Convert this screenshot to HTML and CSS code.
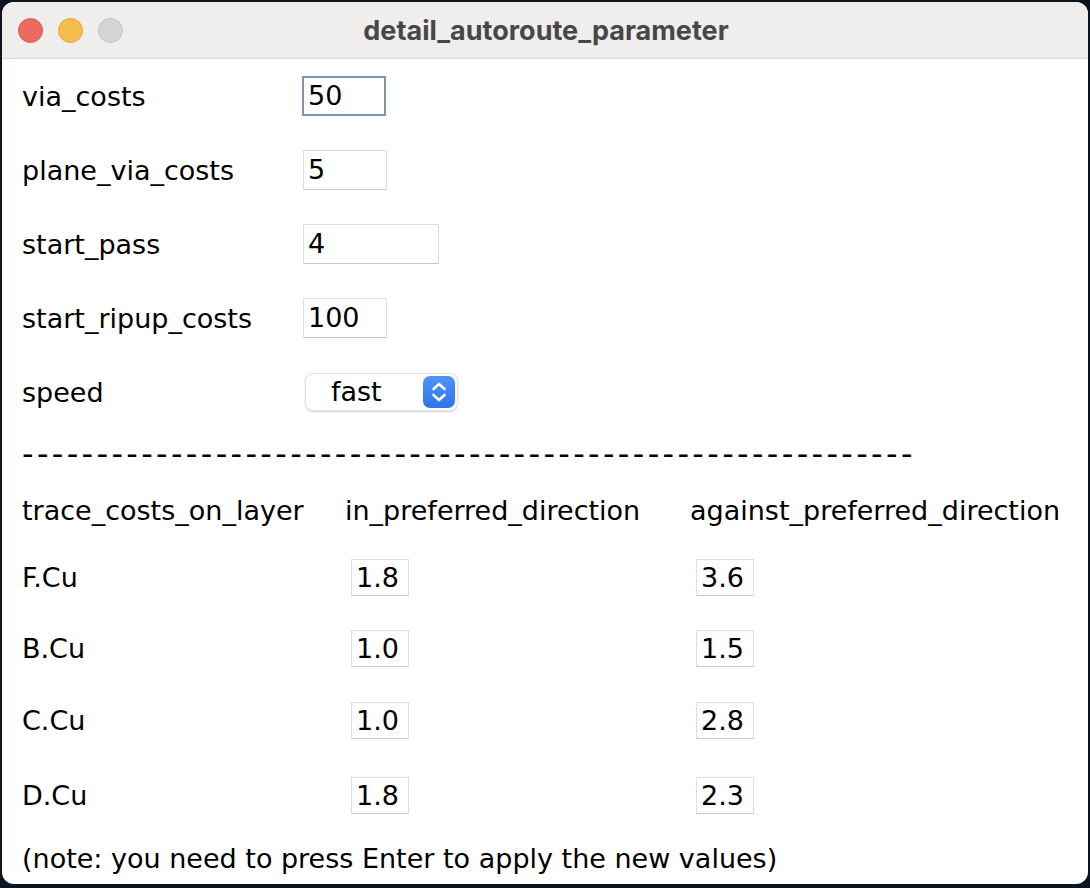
FILE: index.html
```html
<!DOCTYPE html>
<html>
<head>
<meta charset="utf-8">
<link rel="stylesheet" href="styles.css">
</head>
<body>
<div class="window">
  <div class="titlebar">
    <div class="lights">
      <span class="light red"></span>
      <span class="light yellow"></span>
      <span class="light gray"></span>
    </div>
    <div class="title">detail_autoroute_parameter</div>
  </div>
  <div class="content">
    <div class="row">
      <div class="label">via_costs</div>
      <div class="field focused w84">50</div>
    </div>
    <div class="row">
      <div class="label">plane_via_costs</div>
      <div class="field w84">5</div>
    </div>
    <div class="row">
      <div class="label">start_pass</div>
      <div class="field w136">4</div>
    </div>
    <div class="row">
      <div class="label">start_ripup_costs</div>
      <div class="field w84">100</div>
    </div>
    <div class="row">
      <div class="label">speed</div>
      <div class="select">
        <span class="select-text">fast</span>
        <span class="stepper">
          <svg width="32" height="32" viewBox="0 0 32 32">
            <path d="M10.5 13 L16 8 L21.5 13" fill="none" stroke="#fff" stroke-width="2.6" stroke-linecap="round" stroke-linejoin="round"/>
            <path d="M10.5 19 L16 24 L21.5 19" fill="none" stroke="#fff" stroke-width="2.6" stroke-linecap="round" stroke-linejoin="round"/>
          </svg>
        </span>
      </div>
    </div>
    <div class="row dashes-row">
      <div class="dashes">------------------------------------------------------------</div>
    </div>
    <div class="table">
      <div class="trow head">
        <div>trace_costs_on_layer</div>
        <div>in_preferred_direction</div>
        <div>against_preferred_direction</div>
      </div>
      <div class="trow r1">
        <div>F.Cu</div>
        <div><span class="cell">1.8</span></div>
        <div><span class="cell">3.6</span></div>
      </div>
      <div class="trow r2">
        <div>B.Cu</div>
        <div><span class="cell">1.0</span></div>
        <div><span class="cell">1.5</span></div>
      </div>
      <div class="trow r3">
        <div>C.Cu</div>
        <div><span class="cell">1.0</span></div>
        <div><span class="cell">2.8</span></div>
      </div>
      <div class="trow r4">
        <div>D.Cu</div>
        <div><span class="cell">1.8</span></div>
        <div><span class="cell">2.3</span></div>
      </div>
    </div>
    <div class="note">(note: you need to press Enter to apply the new values)</div>
  </div>
</div>
</body>
</html>
```

FILE: styles.css
```css
* { box-sizing: border-box; }
html, body { margin: 0; padding: 0; }
body {
  background: #0c1422;
  width: 1090px;
  height: 888px;
  overflow: hidden;
  font-family: "DejaVu Sans", sans-serif;
}
.window {
  margin: 2px 2px 0 2px;
  width: 1086px;
  height: 882px;
  background: #ffffff;
  border-radius: 12px;
  overflow: hidden;
  display: flex;
  flex-direction: column;
}
.titlebar {
  height: 57px;
  flex: none;
  background: #efeeed;
  border-bottom: 1px solid #d9d8d7;
  display: flex;
  align-items: center;
  position: relative;
}
.lights {
  display: flex;
  gap: 15px;
  padding-left: 16px;
}
.light {
  width: 25px;
  height: 25px;
  border-radius: 50%;
  display: block;
}
.light.red { background: #ee6a5f; border: 1px solid #dc5a4f; }
.light.yellow { background: #f5bf4f; border: 1px solid #dfa63a; }
.light.gray { background: #d6d5d4; border: 1px solid #c4c3c2; }
.title {
  position: absolute;
  left: 0;
  right: 0;
  top: 0;
  bottom: 0;
  display: flex;
  align-items: center;
  justify-content: center;
  font-family: "Inter", sans-serif;
  font-weight: 700;
  font-size: 27px;
  color: #474747;
  padding-left: 2px;
}
.content {
  padding-left: 20px;
  color: #000;
  font-size: 27px;
  display: flex;
  flex-direction: column;
}
.row {
  height: 74px;
  display: flex;
  align-items: center;
}
.label { width: 281px; }
.field {
  height: 40px;
  border: 1px solid #dedede;
  border-bottom-color: #c6c6c6;
  background: #fff;
  padding-left: 4px;
  line-height: 38px;
}
.field.focused {
  border: 2px solid #8394aa;
  margin-left: -1px;
  padding-left: 4px;
  line-height: 36px;
}
.w84 { width: 84px; }
.w136 { width: 136px; }
.select {
  margin-left: 2px;
  width: 153px;
  height: 38px;
  border-radius: 8px;
  background: #fff;
  border: 1px solid #e2e2e2;
  box-shadow: 0 1px 2px rgba(0,0,0,0.18);
  display: flex;
  align-items: center;
  justify-content: space-between;
  padding-left: 25px;
  padding-right: 2px;
}
.select-text { line-height: 36px; }
.stepper {
  width: 32px;
  height: 32px;
  border-radius: 7px;
  background: linear-gradient(#4f93f8, #2f74ee);
  display: block;
}
.stepper svg { display: block; }
.dashes-row { height: 50px; }
.dashes { font-size: 32px; letter-spacing: 3.35px; }
.table { display: flex; flex-direction: column; }
.trow {
  display: grid;
  grid-template-columns: 323px 345px auto;
  align-items: center;
  white-space: nowrap;
}
.trow.head { height: 62px; }
.trow.r1 { height: 72px; }
.trow.r2 { height: 70px; }
.trow.r3 { height: 74px; }
.trow.r4 { height: 76px; }
.cell {
  display: inline-block;
  margin-left: 6px;
  width: 58px;
  height: 37px;
  line-height: 35px;
  border: 1px solid #dfdfdf;
  border-bottom-color: #c6c6c6;
  padding-left: 4px;
}
.note {
  height: 50px;
  display: flex;
  align-items: center;
}
```
